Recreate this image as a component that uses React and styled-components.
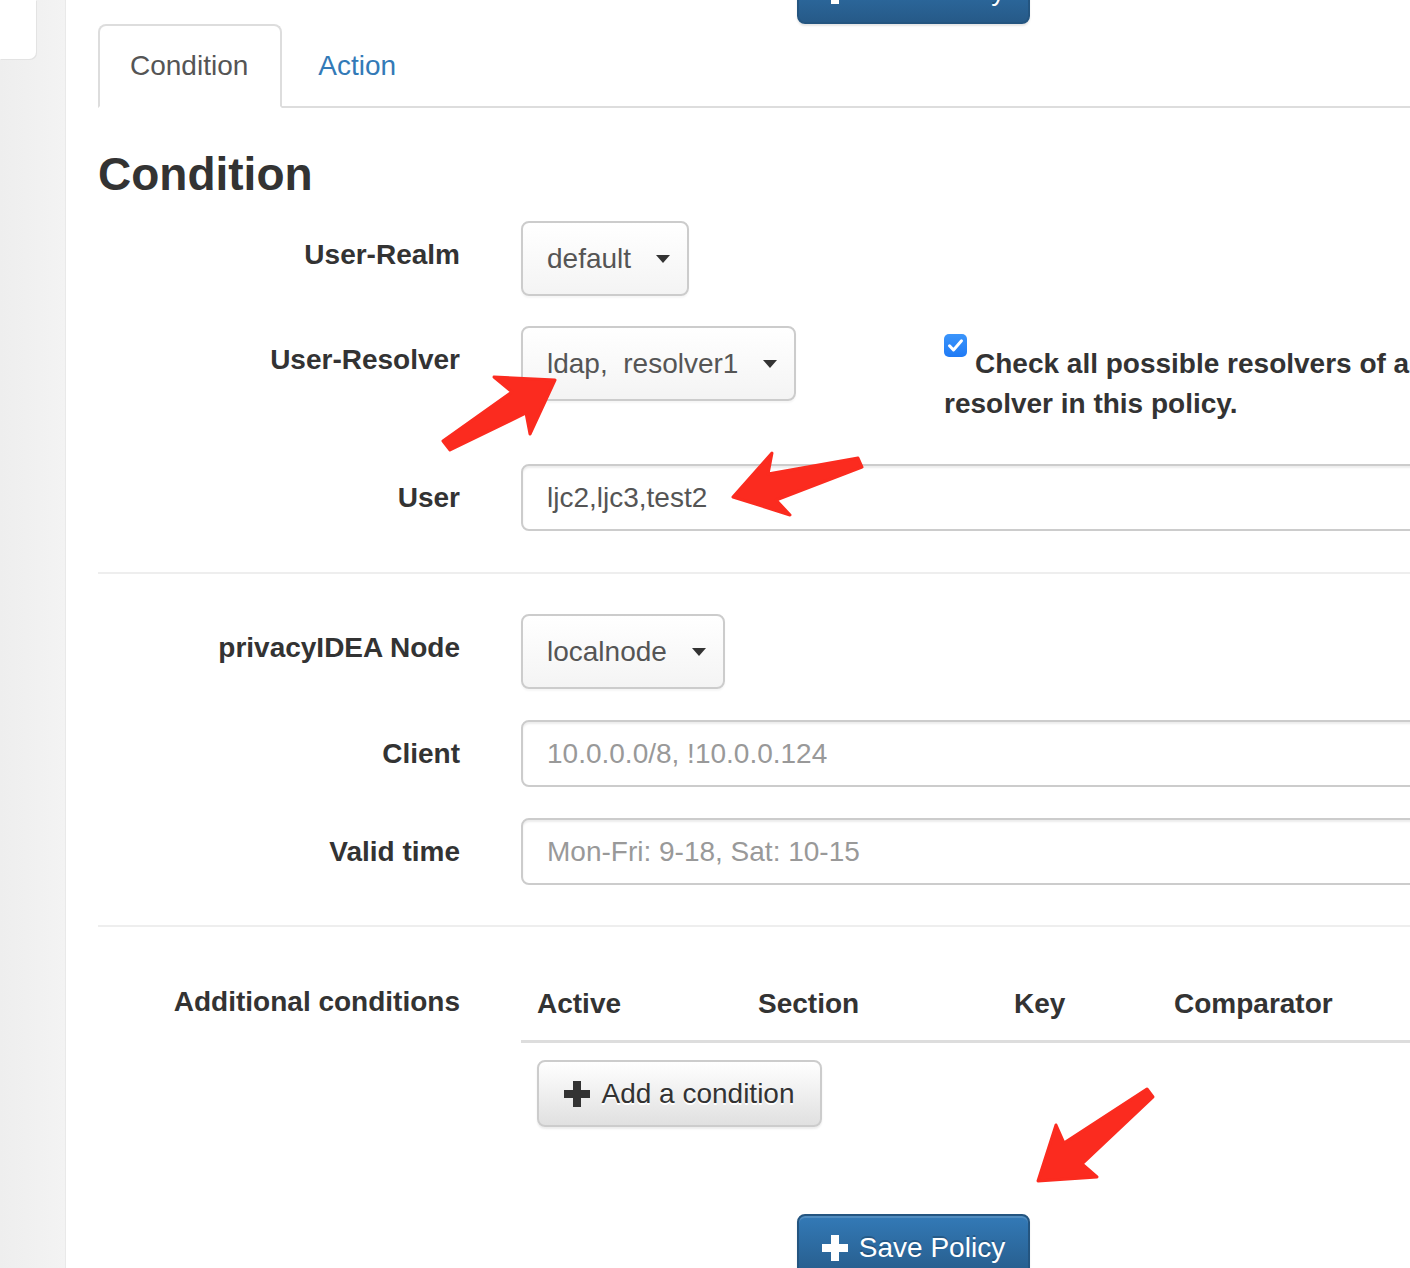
import React from "react";
import styled, { createGlobalStyle } from "styled-components";

const GlobalStyle = createGlobalStyle`
  html, body {
    margin: 0;
    padding: 0;
    background: #fff;
  }
  body {
    font-family: "Liberation Sans", Arial, Helvetica, sans-serif;
    color: #333;
    overflow: hidden;
  }
  * {
    box-sizing: border-box;
  }
`;

const PlusIcon = ({ color }) => (
  <svg width="26" height="26" viewBox="0 0 26 26">
    <path d="M9 0h8v9h9v8h-9v9H9v-9H0V9h9z" fill={color} />
  </svg>
);

const CheckIcon = () => (
  <CheckBox width="23" height="23" viewBox="0 0 23 23">
    <defs>
      <linearGradient id="cb" x1="0" y1="0" x2="0" y2="1">
        <stop offset="0" stopColor="#3b95fb" />
        <stop offset="1" stopColor="#1f7af5" />
      </linearGradient>
    </defs>
    <rect x="0" y="0" width="23" height="23" rx="5" fill="url(#cb)" />
    <path
      d="M5.5 11.8l4 4.2 8-9.2"
      fill="none"
      stroke="#fff"
      strokeWidth="3"
      strokeLinecap="round"
      strokeLinejoin="round"
    />
  </CheckBox>
);

const SelectButton = ({ children }) => (
  <Select>
    {children}
    <Caret />
  </Select>
);

const App = () => {
  return (
    <>
      <GlobalStyle />
      <Page>
        <Sidebar>
          <SideCard />
        </Sidebar>
        <Main>
          <Content>
            <ButtonRow $top={-43}>
              <PrimaryButton>
                <PlusIcon color="#fff" />
                Save Policy
              </PrimaryButton>
            </ButtonRow>

            <Tabs>
              <Tab $active>Condition</Tab>
              <Tab>Action</Tab>
            </Tabs>

            <Heading>Condition</Heading>

            <FormRow $top={22}>
              <Label>User-Realm</Label>
              <div>
                <SelectButton>default</SelectButton>
              </div>
            </FormRow>

            <FormRow $top={30}>
              <Label>User-Resolver</Label>
              <ResolverLine>
                <div>
                  <SelectButton>ldap,&nbsp; resolver1</SelectButton>
                </div>
                <CheckText>
                  <CheckIcon />
                  Check all possible resolvers of a user to match the resolver in this policy.
                </CheckText>
              </ResolverLine>
            </FormRow>

            <FormRow $top={40}>
              <Label>User</Label>
              <TextInput type="text" defaultValue="ljc2,ljc3,test2" />
            </FormRow>

            <Divider $top={41} />

            <FormRow $top={40}>
              <Label>privacyIDEA Node</Label>
              <div>
                <SelectButton>localnode</SelectButton>
              </div>
            </FormRow>

            <FormRow $top={31}>
              <Label>Client</Label>
              <TextInput type="text" placeholder="10.0.0.0/8, !10.0.0.124" />
            </FormRow>

            <FormRow $top={31}>
              <Label>Valid time</Label>
              <TextInput type="text" placeholder="Mon-Fri: 9-18, Sat: 10-15" />
            </FormRow>

            <Divider $top={40} />

            <FormRow $top={41}>
              <Label>Additional conditions</Label>
              <div>
                <TableHead>
                  <HeadCell>Active</HeadCell>
                  <HeadCell>Section</HeadCell>
                  <HeadCell>Key</HeadCell>
                  <HeadCell>Comparator</HeadCell>
                </TableHead>
                <TableFoot>
                  <DefaultButton>
                    <PlusIcon color="#333" />
                    Add a condition
                  </DefaultButton>
                </TableFoot>
              </div>
            </FormRow>

            <ButtonRow $top={71}>
              <PrimaryButton>
                <PlusIcon color="#fff" />
                Save Policy
              </PrimaryButton>
            </ButtonRow>
          </Content>
        </Main>

        {/* red annotation arrows drawn over the screenshot */}
        <Annotations width="1410" height="1268" viewBox="0 0 1410 1268">
          <Arrow points="555,380 494,377 512,392 443,441 450,450 526,413 530,434" />
          <Arrow points="733,497 772,453 768,474 858,458 862,467 776,500 790,515" />
          <Arrow points="1038,1181 1056,1125 1064,1143 1147,1089 1153,1097 1082,1164 1097,1177" />
        </Annotations>
      </Page>
    </>
  );
};

const Page = styled.div`
  position: relative;
  display: flex;
  width: 1410px;
  height: 1268px;
  overflow: hidden;
  background: #fff;
`;

const Sidebar = styled.aside`
  flex: 0 0 66px;
  background: linear-gradient(to right, #eeeeee, #f3f3f3);
  border-right: 1px solid #e9e9e9;
`;

const SideCard = styled.div`
  width: 36px;
  height: 59px;
  background: #fff;
  border-bottom-right-radius: 7px;
  box-shadow: 1px 1px 0 #e3e3e3;
`;

const Main = styled.main`
  flex: 1;
  min-width: 0;
  overflow: hidden;
`;

const Content = styled.div`
  width: 1631px;
  margin-left: 32px;
`;

const ButtonRow = styled.div`
  display: flex;
  justify-content: center;
  margin-top: ${(p) => p.$top}px;
`;

const BaseButton = styled.button`
  display: inline-flex;
  align-items: center;
  justify-content: center;
  gap: 11px;
  height: 67px;
  padding: 0;
  border-radius: 8px;
  border: 2px solid;
  font-family: inherit;
  font-size: 28px;
  line-height: 40px;
  cursor: pointer;
`;

const PrimaryButton = styled(BaseButton)`
  width: 233px;
  color: #fff;
  border-color: #245580;
  background: linear-gradient(to bottom, #337ab7 0%, #265a88 100%);
  text-shadow: 0 -2px 0 rgba(0, 0, 0, 0.2);
  box-shadow: inset 0 2px 0 rgba(255, 255, 255, 0.15), 0 2px 2px rgba(0, 0, 0, 0.1);
`;

const DefaultButton = styled(BaseButton)`
  width: 285px;
  color: #333;
  border-color: #ccc;
  background: linear-gradient(to bottom, #fff 0%, #e0e0e0 100%);
  text-shadow: 0 2px 0 #fff;
  box-shadow: inset 0 2px 0 rgba(255, 255, 255, 0.15), 0 2px 2px rgba(0, 0, 0, 0.075);
`;

const Tabs = styled.ul`
  display: flex;
  list-style: none;
  margin: 0;
  padding: 0;
  border-bottom: 2px solid #ddd;
`;

const Tab = styled.li`
  margin-right: 4px;
  margin-bottom: -2px;
  padding: 20px 32px 20px 30px;
  border: 2px solid ${(p) => (p.$active ? "#ddd" : "transparent")};
  border-bottom-color: ${(p) => (p.$active ? "#fff" : "transparent")};
  border-radius: 8px 8px 0 0;
  background: ${(p) => (p.$active ? "#fff" : "transparent")};
  font-size: 28px;
  line-height: 40px;
  color: ${(p) => (p.$active ? "#555" : "#337ab7")};
`;

const Heading = styled.h2`
  margin: 41px 0 0;
  font-size: 46px;
  line-height: 50px;
  font-weight: bold;
  color: #333;
`;

const FormRow = styled.div`
  display: grid;
  grid-template-columns: 362px 1fr;
  column-gap: 61px;
  align-items: start;
  margin-top: ${(p) => p.$top}px;
`;

const Label = styled.label`
  padding-top: 14px;
  text-align: right;
  font-weight: bold;
  font-size: 28px;
  line-height: 40px;
  color: #333;
`;

const Select = styled.div`
  display: inline-flex;
  align-items: center;
  height: 75px;
  padding: 0 17px 0 24px;
  border: 2px solid #ccc;
  border-radius: 8px;
  background: linear-gradient(to bottom, #ffffff, #f4f4f4);
  box-shadow: 0 2px 2px rgba(0, 0, 0, 0.04);
  font-size: 28px;
  color: #555;
  white-space: nowrap;
`;

const Caret = styled.span`
  margin-left: 25px;
  width: 0;
  height: 0;
  border-top: 8px solid #333;
  border-left: 7px solid transparent;
  border-right: 7px solid transparent;
`;

const ResolverLine = styled.div`
  display: grid;
  grid-template-columns: 423px 760px;
  align-items: start;
`;

const CheckText = styled.div`
  margin-top: 8px;
  font-weight: bold;
  font-size: 28px;
  line-height: 40px;
  color: #333;
`;

const CheckBox = styled.svg`
  display: inline-block;
  vertical-align: baseline;
  margin: 0 8px 16px 0;
`;

const TextInput = styled.input`
  display: block;
  width: 100%;
  height: 67px;
  padding: 0 24px;
  border: 2px solid #ccc;
  border-radius: 8px;
  font-family: inherit;
  font-size: 28px;
  color: #555;
  background: #fff;
  box-shadow: inset 0 2px 2px rgba(0, 0, 0, 0.075);
  outline: none;

  &::placeholder {
    color: #999;
  }
`;

const Divider = styled.hr`
  margin: ${(p) => p.$top}px 0 0;
  height: 2px;
  border: 0;
  background: #eee;
`;

const TableHead = styled.div`
  display: grid;
  grid-template-columns: 221px 256px 160px 1fr;
  border-bottom: 3px solid #ddd;
`;

const HeadCell = styled.div`
  padding: 16px;
  font-weight: bold;
  font-size: 28px;
  line-height: 40px;
  color: #333;
  white-space: nowrap;
`;

const TableFoot = styled.div`
  padding: 17px 16px 16px;
`;

const Annotations = styled.svg`
  position: absolute;
  top: 0;
  left: 0;
  pointer-events: none;
`;

const Arrow = styled.polygon`
  fill: #fb2b1f;
  stroke: #fb2b1f;
  stroke-width: 3;
  stroke-linejoin: round;
`;

export default App;
